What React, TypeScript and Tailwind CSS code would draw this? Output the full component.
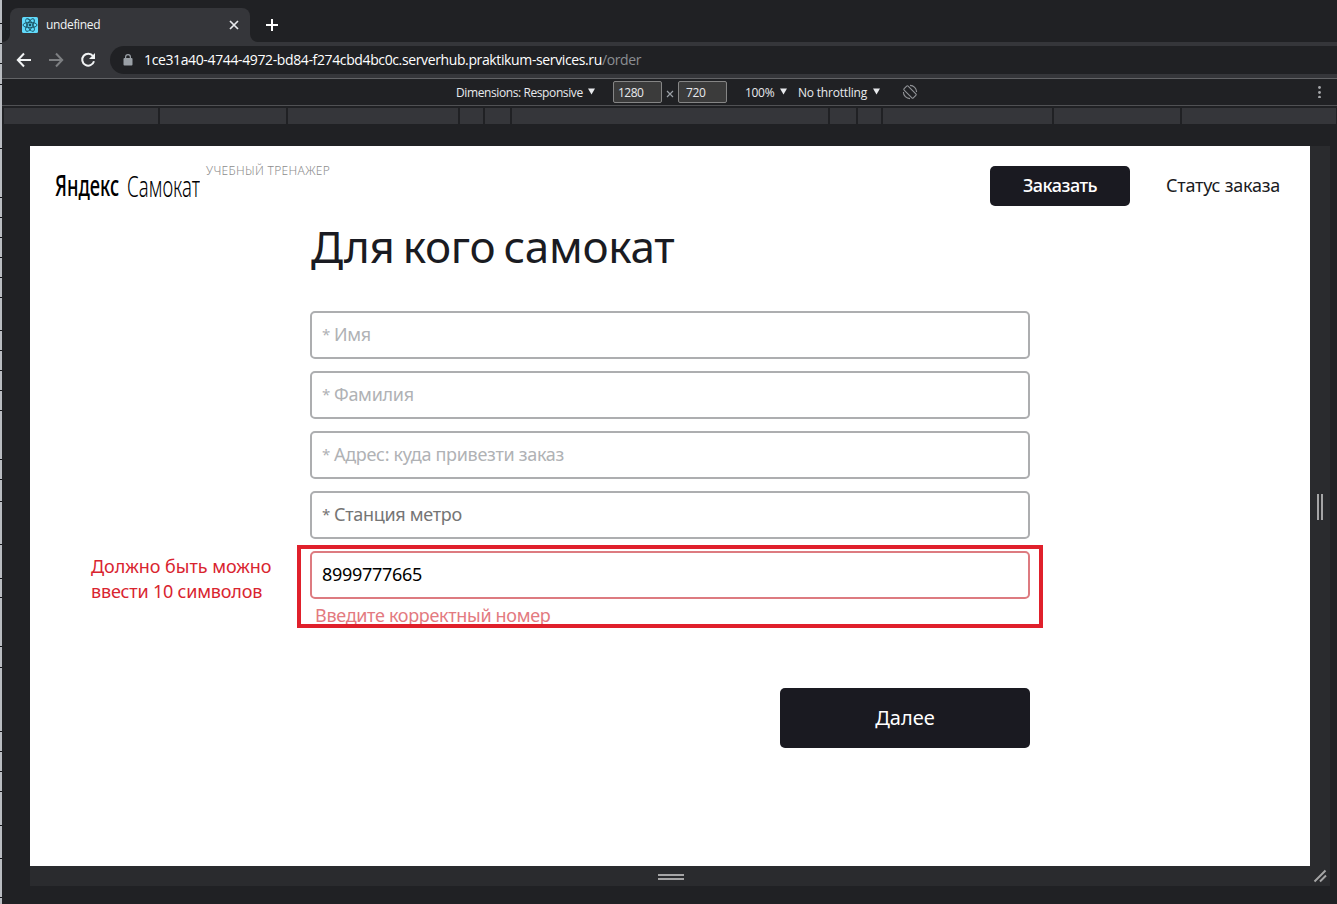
import React from "react";

const UI = "font-['Open_Sans','Noto_Sans',sans-serif]";
const PAGE = "font-['Noto_Sans','Open_Sans',sans-serif]";

const EDGE_TICKS = [
  23, 43, 63, 84, 148, 197, 217, 237, 257, 277, 297, 330, 350, 370, 390, 410, 459, 479, 501, 544,
  578, 597, 646, 667, 731, 751, 771, 791, 825, 858, 897,
];

function ReactIcon() {
  return (
    <svg className="h-4 w-4 shrink-0" viewBox="0 0 16 16" fill="none" stroke="#174f60" strokeWidth="0.9">
      <rect width="16" height="16" rx="1.5" fill="#61dafb" stroke="none" />
      <ellipse cx="8" cy="8" rx="7" ry="2.7" />
      <ellipse cx="8" cy="8" rx="7" ry="2.7" transform="rotate(60 8 8)" />
      <ellipse cx="8" cy="8" rx="7" ry="2.7" transform="rotate(120 8 8)" />
      <circle cx="8" cy="8" r="1.4" fill="#174f60" stroke="none" />
    </svg>
  );
}

function Caret() {
  return (
    <svg className="mb-px h-[7px] w-[7px] shrink-0" viewBox="0 0 7 7">
      <path d="M0 0.5H7L3.5 6.5Z" fill="#e8eaed" />
    </svg>
  );
}

function TabStrip() {
  return (
    <div className="flex h-[42px] shrink-0 items-end bg-[#202124] pl-2">
      <div className="relative flex h-[34px] w-60 items-center rounded-t-lg bg-[#35363a] pl-3 pr-[11px]">
        <svg className="absolute -left-2 bottom-0 h-2 w-2" viewBox="0 0 8 8">
          <path d="M8 0A8 8 0 0 1 0 8H8Z" fill="#35363a" />
        </svg>
        <svg className="absolute -right-2 bottom-0 h-2 w-2" viewBox="0 0 8 8">
          <path d="M0 0A8 8 0 0 0 8 8H0Z" fill="#35363a" />
        </svg>
        <ReactIcon />
        <span className="ml-2 text-[12px] leading-4 tracking-[-0.35px] text-[#f1f3f4]">undefined</span>
        <svg className="ml-auto h-[10px] w-[10px]" viewBox="0 0 10 10" stroke="#e8eaed" strokeWidth="1.7">
          <path d="M1 1L9 9M9 1L1 9" />
        </svg>
      </div>
      <svg className="mb-[11px] ml-[16px] h-3 w-3" viewBox="0 0 12 12" stroke="#fff" strokeWidth="2">
        <path d="M6 0V12M0 6H12" />
      </svg>
    </div>
  );
}

function AddressBar() {
  return (
    <div className="flex h-9 shrink-0 items-center bg-[#35363a] pl-[14px]">
      <svg className="h-4 w-4" viewBox="0 0 16 16" fill="none" stroke="#f1f3f4" strokeWidth="2">
        <path d="M15 8H2.5M8 1.5L1.8 8L8 14.5" />
      </svg>
      <svg className="ml-4 h-4 w-4" viewBox="0 0 16 16" fill="none" stroke="#7d7f82" strokeWidth="2">
        <path d="M1 8H13.5M8 1.5L14.2 8L8 14.5" />
      </svg>
      <svg className="ml-4 h-4 w-4" viewBox="0 0 16 16" fill="none" stroke="#f1f3f4" strokeWidth="2">
        <path d="M13 4A6 6 0 1 0 14 9.3" />
        <path d="M15 1V7H9Z" fill="#f1f3f4" stroke="none" />
      </svg>
      <div className="ml-[14px] flex h-7 flex-1 items-center rounded-l-full bg-[#202124] pl-[13px]">
        <svg className="h-3 w-[10px]" viewBox="0 0 10 12">
          <rect x="0.5" y="4" width="9" height="7.5" rx="1" fill="#9aa0a6" />
          <path d="M2.6 5V3A2.4 2.4 0 0 1 7.4 3V5" fill="none" stroke="#9aa0a6" strokeWidth="1.2" />
        </svg>
        <span className="ml-[11px] whitespace-nowrap text-[14px] leading-5 tracking-[-0.375px] text-white">
          1ce31a40-4744-4972-bd84-f274cbd4bc0c.serverhub.praktikum-services.ru
          <span className="text-[#8b8e92]">/order</span>
        </span>
      </div>
    </div>
  );
}

function DeviceToolbar() {
  return (
    <div className="flex h-7 shrink-0 items-center border-y border-t-[#626366] border-b-[#505154] bg-[#202124] pl-[454px] pr-[15px] text-[12px] text-[#e8eaed]">
      <span className="w-[132px] whitespace-nowrap pt-[2px] tracking-[-0.4px]">Dimensions: Responsive</span>
      <Caret />
      <span className="ml-[18px] flex h-[22px] w-[49px] items-center rounded-[2px] border border-[#858585] bg-[#3b3b3b] pl-1 pt-px tracking-[-0.5px]">1280</span>
      <svg className="mx-1 mt-1 h-2 w-2" viewBox="0 0 8 8" stroke="#9aa0a6" strokeWidth="1.2">
        <path d="M1 1L7 7M7 1L1 7" />
      </svg>
      <span className="flex h-[22px] w-[49px] items-center rounded-[2px] border border-[#858585] bg-[#3b3b3b] pl-[7px] pt-px tracking-[-0.3px]">720</span>
      <span className="ml-[18px] w-[35px] pt-[2px] tracking-[-0.3px]">100%</span>
      <Caret />
      <span className="ml-[11px] w-[75px] whitespace-nowrap pt-[2px] tracking-[-0.2px]">No throttling</span>
      <Caret />
      <svg className="ml-[22px] h-4 w-4" viewBox="0 0 16 16" fill="none" stroke="#919397" strokeWidth="1.1">
        <rect x="5.2" y="1.5" width="5.6" height="13" rx="1" transform="rotate(-45 8 8)" />
        <path d="M8 1.4A6.6 6.6 0 0 1 14.6 8M8 14.6A6.6 6.6 0 0 1 1.4 8" />
      </svg>
      <svg className="ml-auto h-3 w-1" viewBox="0 0 4 12" fill="#a5a7aa">
        <circle cx="1.5" cy="1.5" r="1.4" />
        <circle cx="1.5" cy="6.5" r="1.4" />
        <circle cx="1.5" cy="11.2" r="1.4" />
      </svg>
    </div>
  );
}

function Ruler() {
  return (
    <div className="mb-[22px] ml-[2px] mr-px mt-[2px] flex h-4 shrink-0 gap-[2px]">
      <i className="w-[154px] bg-[#35363a]" />
      <i className="w-[126px] bg-[#35363a]" />
      <i className="w-[170px] bg-[#35363a]" />
      <i className="w-[23px] bg-[#35363a]" />
      <i className="w-[25px] bg-[#35363a]" />
      <i className="w-[316px] bg-[#35363a]" />
      <i className="w-[26px] bg-[#35363a]" />
      <i className="w-[23px] bg-[#35363a]" />
      <i className="w-[169px] bg-[#35363a]" />
      <i className="w-[126px] bg-[#35363a]" />
      <i className="flex-1 bg-[#35363a]" />
    </div>
  );
}

function Header() {
  return (
    <header className="flex h-20 pl-[25px] pr-[30px]">
      <div className="flex w-[146px] items-start pt-[21px] text-[29px] leading-9 text-black">
        <span className="w-[72px] shrink-0">
          <span className="inline-block origin-left scale-x-[0.633] whitespace-nowrap font-medium">Яндекс</span>
        </span>
        <span className="mt-px w-[74px] shrink-0">
          <span className="inline-block origin-left scale-x-[0.64] whitespace-nowrap font-light">Самокат</span>
        </span>
      </div>
      <span className="ml-[5px] mt-[17px] whitespace-nowrap text-[12px] font-light leading-4 tracking-[0.32px] text-[#8d8d8d]">УЧЕБНЫЙ ТРЕНАЖЕР</span>
      <button className="ml-auto mt-5 h-10 w-[140px] rounded-[5px] bg-[#1a1a21] pb-[2px] text-[18px] font-medium leading-6 tracking-[-0.5px] text-white">Заказать</button>
      <span className="ml-9 mt-[27px] w-[114px] whitespace-nowrap text-[18px] leading-6 tracking-[-0.23px] text-[#1a1b22]">Статус заказа</span>
    </header>
  );
}

function Field({ children, className, required }: { children: React.ReactNode; className: string; required?: boolean }) {
  return (
    <div className={`flex h-12 shrink-0 items-center rounded-[5px] border-2 pb-[2px] pl-[10px] text-[18px] leading-6 tracking-[-0.3px] ${className}`}>
      {required && <span className="w-[12px] text-[15px]">*</span>}
      <span>{children}</span>
    </div>
  );
}

function OrderForm() {
  return (
    <main className="mx-auto flex w-[720px] flex-col">
      <h1 className="mt-[-10px] h-[95px] whitespace-nowrap pl-px text-[44px] leading-[60px] tracking-[-0.3px] text-[#1a1b22] [word-spacing:-3px]">Для кого самокат</h1>
      <div className="flex flex-col gap-3">
        <Field required className="border-[#adaeb0] text-[#b0b2b5]">Имя</Field>
        <Field required className="border-[#adaeb0] text-[#b0b2b5]">Фамилия</Field>
        <Field required className="border-[#adaeb0] text-[#b0b2b5]">Адрес: куда привезти заказ</Field>
        <Field required className="border-[#adaeb0] text-[#757575]">Станция метро</Field>
        <div className="relative">
          <Field className="border-[#dd7b80] text-black">8999777665</Field>
          <p className="ml-[5px] mt-1 text-[18px] leading-6 tracking-[-0.32px] text-[#e37a80]">Введите корректный номер</p>
          <div className="absolute -left-[13px] -top-[6px] h-[83px] w-[746px] border-4 border-[#e0202b]" />
          <p className="absolute -left-[219px] top-[3px] whitespace-nowrap text-[18px] leading-[25px] text-[#d9242f]">
            <span className="tracking-[-0.05px]">Должно быть можно</span>
            <br />
            <span className="tracking-[-0.2px]">ввести 10 символов</span>
          </p>
        </div>
      </div>
      <button className="ml-auto mt-[61px] h-[60px] w-[250px] rounded-[5px] bg-[#1a1a21] text-[20px] leading-6 text-white">Далее</button>
    </main>
  );
}

export default function App() {
  return (
    <div className={`flex h-[904px] w-[1337px] overflow-hidden bg-[#202124] ${UI}`}>
      <div className="flex w-[2px] shrink-0 flex-col bg-[#b9bcc1]">
        {EDGE_TICKS.map((y, i) => (
          <i
            key={y}
            className="h-px shrink-0 bg-[#15171a]"
            style={{ marginTop: i === 0 ? y : y - EDGE_TICKS[i - 1] - 1 }}
          />
        ))}
      </div>
      <div className="flex min-w-0 flex-1 flex-col bg-[#202124]">
        <TabStrip />
        <AddressBar />
        <DeviceToolbar />
        <Ruler />
        <div className="ml-7 flex h-[720px] w-[1300px] shrink-0">
          <div className={`w-[1280px] bg-white ${PAGE}`}>
            <Header />
            <OrderForm />
          </div>
          <div className="flex w-5 items-center justify-center gap-[2px] bg-[#2a2b2e] pt-[2px]">
            <i className="h-[26px] w-[2px] bg-[#a5a5a6]" />
            <i className="h-[26px] w-[2px] bg-[#a5a5a6]" />
          </div>
        </div>
        <div className="ml-7 flex h-5 w-[1300px] shrink-0 bg-[#2a2b2e]">
          <div className="flex w-[1280px] flex-col items-center justify-center gap-[2px] pl-[2px] pt-[2px]">
            <i className="h-[2px] w-[26px] bg-[#a5a5a6]" />
            <i className="h-[2px] w-[26px] bg-[#a5a5a6]" />
          </div>
          <svg className="h-5 w-5" viewBox="0 0 20 20" stroke="#a5a5a6" strokeWidth="2">
            <path d="M4.5 15.5L15.5 4.5M10 15.5L16 9.5" />
          </svg>
        </div>
      </div>
    </div>
  );
}
